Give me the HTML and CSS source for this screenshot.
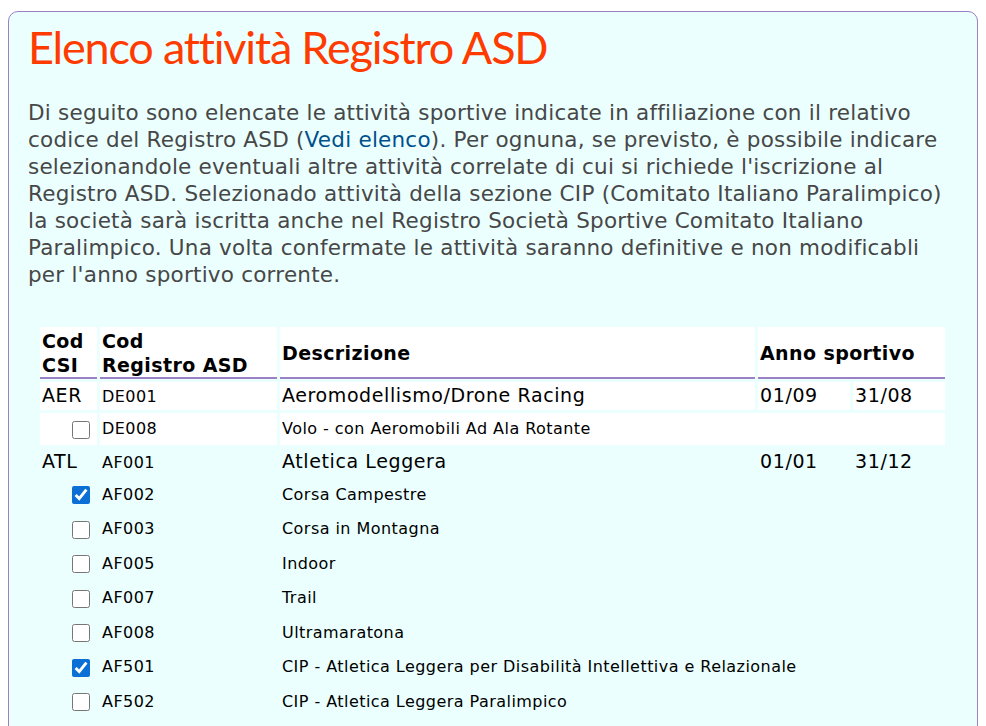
FILE: index.html
```html
<!DOCTYPE html>
<html lang="it">
<head>
<meta charset="utf-8">
<title>Elenco attività Registro ASD</title>
<link rel="stylesheet" href="styles.css">
</head>
<body>
<div class="panel">
  <h1 class="title">Elenco attività Registro ASD</h1>
  <p class="intro">Di seguito sono elencate le attività sportive indicate in affiliazione con il relativo codice del Registro ASD (<a href="#" class="link">Vedi elenco</a>). Per ognuna, se previsto, è possibile indicare selezionandole eventuali altre attività correlate di cui si richiede l'iscrizione al Registro ASD. Selezionado attività della sezione CIP (Comitato Italiano Paralimpico) la società sarà iscritta anche nel Registro Società Sportive Comitato Italiano Paralimpico. Una volta confermate le attività saranno definitive e non modificabli per l'anno sportivo corrente.</p>
  <table class="grid">
    <colgroup>
      <col class="c1"><col class="c2"><col class="c3"><col class="c4"><col class="c5">
    </colgroup>
    <thead>
      <tr>
        <th>Cod<br>CSI</th>
        <th>Cod<br>Registro ASD</th>
        <th>Descrizione</th>
        <th colspan="2">Anno sportivo</th>
      </tr>
    </thead>
    <tbody class="grp white">
      <tr class="main">
        <td>AER</td><td class="reg">DE001</td><td>Aeromodellismo/Drone Racing</td><td>01/09</td><td>31/08</td>
      </tr>
      <tr class="sub">
        <td class="chk"><input type="checkbox"></td><td>DE008</td><td colspan="3">Volo - con Aeromobili Ad Ala Rotante</td>
      </tr>
    </tbody>
    <tbody class="grp">
      <tr class="main">
        <td>ATL</td><td class="reg">AF001</td><td>Atletica Leggera</td><td>01/01</td><td>31/12</td>
      </tr>
      <tr class="sub"><td class="chk"><input type="checkbox" checked></td><td>AF002</td><td colspan="3">Corsa Campestre</td></tr>
      <tr class="sub"><td class="chk"><input type="checkbox"></td><td>AF003</td><td colspan="3">Corsa in Montagna</td></tr>
      <tr class="sub"><td class="chk"><input type="checkbox"></td><td>AF005</td><td colspan="3">Indoor</td></tr>
      <tr class="sub"><td class="chk"><input type="checkbox"></td><td>AF007</td><td colspan="3">Trail</td></tr>
      <tr class="sub"><td class="chk"><input type="checkbox"></td><td>AF008</td><td colspan="3">Ultramaratona</td></tr>
      <tr class="sub"><td class="chk"><input type="checkbox" checked></td><td>AF501</td><td colspan="3">CIP - Atletica Leggera per Disabilità Intellettiva e Relazionale</td></tr>
      <tr class="sub"><td class="chk"><input type="checkbox"></td><td>AF502</td><td colspan="3">CIP - Atletica Leggera Paralimpico</td></tr>
      <tr class="sub"><td class="chk"><input type="checkbox"></td><td>AF503</td><td colspan="3">CIP - Atletica Leggera per Disabilità Visiva</td></tr>
    </tbody>
  </table>
</div>
</body>
</html>
```
FILE: styles.css
```css
html, body {
  margin: 0;
  padding: 0;
  background: #ffffff;
}
body {
  padding: 11px 8px 0 8px;
  font-family: "DejaVu Sans", Verdana, sans-serif;
  color: #000;
}
.panel {
  background: #ebffff;
  border: 1px solid #9a80c4;
  border-radius: 10px;
  padding: 7px 19px 40px 19px;
  min-height: 760px;
}
.title {
  margin: 0;
  font-family: Lato, "Segoe UI", sans-serif;
  font-weight: 400;
  font-size: 45px;
  line-height: 56px;
  letter-spacing: -1.2px;
  font-variant-ligatures: none;
  color: #ff3b00;
}
.intro {
  margin: 24px 0 0 0;
  font-size: 21.5px;
  line-height: 27px;
  letter-spacing: 0.22px;
  color: #474747;
}
.link {
  color: #00508c;
  text-decoration: none;
}
.grid {
  margin: 36px 0 0 9px;
  border-collapse: separate;
  border-spacing: 3px 3px;
  table-layout: fixed;
  width: 911px;
}
.c1 { width: 57px; }
.c2 { width: 177px; }
.c3 { width: 475px; }
.c4 { width: 92px; }
.c5 { width: 92px; }
.grid th {
  background: #ffffff;
  text-align: left;
  font-size: 19px;
  line-height: 24px;
  font-weight: 700;
  letter-spacing: 0.4px;
  padding: 2px 2px 0 2px;
  border-bottom: 2px solid #9a80c4;
  vertical-align: middle;
}
.grid td {
  padding: 0 2px;
}
.white td {
  background: #ffffff;
}
.main td {
  height: 27.5px;
  font-size: 19px;
  letter-spacing: 0.6px;
  vertical-align: baseline;
  line-height: 27px;
}
.main td.reg {
  font-size: 16px;
  letter-spacing: 0.45px;
}
.sub td {
  height: 31.5px;
  font-size: 16px;
  letter-spacing: 0.45px;
  vertical-align: middle;
}
.chk {
  text-align: right;
}
.chk input {
  width: 18px;
  height: 18px;
  margin: 0 5px 0 0;
  vertical-align: middle;
  accent-color: #0b6fd6;
}
```
